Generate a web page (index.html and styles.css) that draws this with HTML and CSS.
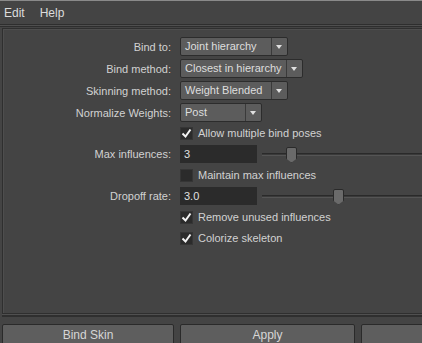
FILE: index.html
```html
<!DOCTYPE html>
<html lang="en">
<head>
    <meta charset="UTF-8">
    <title>Bind Skin Options</title>
    <link rel="stylesheet" href="styles.css">
</head>
<body>
    <div class="window">
        <div class="menubar">
            <span class="menu-item">Edit</span>
            <span class="menu-item">Help</span>
        </div>

        <div class="panel">
            <div class="options">
                <div class="row">
                    <span class="label">Bind to:</span>
                    <div class="dropdown w107"><span class="value">Joint hierarchy</span><span class="arrow"></span></div>
                </div>
                <div class="row">
                    <span class="label">Bind method:</span>
                    <div class="dropdown w122"><span class="value">Closest in hierarchy</span><span class="arrow"></span></div>
                </div>
                <div class="row">
                    <span class="label">Skinning method:</span>
                    <div class="dropdown w107"><span class="value">Weight Blended</span><span class="arrow"></span></div>
                </div>
                <div class="row">
                    <span class="label">Normalize Weights:</span>
                    <div class="dropdown w81"><span class="value">Post</span><span class="arrow"></span></div>
                </div>
                <div class="row check-row">
                    <span class="label"></span>
                    <label class="check"><span class="box"><svg viewBox="0 0 13 13"><polyline points="2.5,6.5 5.5,9.5 10.5,2.5"/></svg></span>Allow multiple bind poses</label>
                </div>
                <div class="row field-row">
                    <span class="label">Max influences:</span>
                    <div class="field">3</div>
                    <div class="slider"><span class="thumb" style="left: 24px"></span></div>
                </div>
                <div class="row check-row">
                    <span class="label"></span>
                    <label class="check"><span class="box"></span>Maintain max influences</label>
                </div>
                <div class="row field-row">
                    <span class="label">Dropoff rate:</span>
                    <div class="field">3.0</div>
                    <div class="slider"><span class="thumb" style="left: 71px"></span></div>
                </div>
                <div class="row check-row">
                    <span class="label"></span>
                    <label class="check"><span class="box"><svg viewBox="0 0 13 13"><polyline points="2.5,6.5 5.5,9.5 10.5,2.5"/></svg></span>Remove unused influences</label>
                </div>
                <div class="row check-row last">
                    <span class="label"></span>
                    <label class="check"><span class="box"><svg viewBox="0 0 13 13"><polyline points="2.5,6.5 5.5,9.5 10.5,2.5"/></svg></span>Colorize skeleton</label>
                </div>
            </div>
        </div>

        <div class="buttons">
            <button class="btn bind">Bind Skin</button>
            <button class="btn apply">Apply</button>
            <button class="btn close" title="Close"></button>
        </div>
    </div>
</body>
</html>
```

FILE: styles.css
```css
body {
    margin: 0;
    background-color: #444444;
    font-family: "Liberation Sans", Arial, sans-serif;
    font-size: 11px;
    color: #d2d2d2;
    overflow: hidden;
}

.window {
    width: 422px;
    height: 343px;
    overflow: hidden;
    border-top: 1px solid #8a8a8a;
    box-sizing: border-box;
}

.menubar {
    height: 23px;
    display: flex;
    align-items: center;
    gap: 15px;
    padding-left: 4px;
    border-bottom: 1px solid #2e2e2e;
    box-shadow: 0 1px 0 #4f4f4f, 0 2px 0 #2e2e2e;
    font-size: 12px;
    color: #dcdcdc;
}

.panel {
    margin: 3px 0 0 2px;
    height: 276px;
    border: 1px solid #2f2f2f;
    border-right: none;
    box-shadow: inset 1px 1px 0 #4e4e4e, 0 1px 0 #505050, 0 3px 0 #2f2f2f;
    padding-top: 8px;
}

.options {
    display: flex;
    flex-direction: column;
    gap: 3px;
}

.row {
    display: flex;
    align-items: center;
    height: 19px;
}

.check-row {
    height: 16px;
}

.check-row.last {
    margin-top: 2px;
}

.field-row {
    height: 20px;
}

.label {
    width: 168px;
    flex-shrink: 0;
    text-align: right;
    padding-right: 9px;
}

.dropdown {
    height: 19px;
    box-sizing: border-box;
    display: flex;
    background-color: #5c5c5c;
    border: 1px solid #2c2c2c;
    border-radius: 2px;
    color: #dedede;
}

.w107 { width: 108px; }
.w122 { width: 123px; }
.w81 { width: 82px; }

.dropdown .value {
    flex: 1;
    padding-left: 4px;
    line-height: 17px;
    white-space: nowrap;
}

.dropdown .arrow {
    width: 15px;
    border-left: 1px solid #3a3a3a;
    position: relative;
}

.dropdown .arrow::after {
    content: "";
    position: absolute;
    left: 4px;
    top: 7px;
    border-left: 3.5px solid transparent;
    border-right: 3.5px solid transparent;
    border-top: 4px solid #e0e0e0;
}

.check {
    display: flex;
    align-items: center;
    gap: 5px;
    white-space: nowrap;
}

.box {
    width: 13px;
    height: 13px;
    background-color: #2b2b2b;
    box-shadow: inset 0 0 0 1px #353535;
}

.box svg {
    display: block;
    width: 13px;
    height: 13px;
}

.box polyline {
    fill: none;
    stroke: #f2f2f2;
    stroke-width: 2;
}

.field {
    width: 77px;
    height: 18px;
    box-sizing: border-box;
    background-color: #2b2b2b;
    padding-left: 4px;
    line-height: 18px;
    color: #e0e0e0;
    flex-shrink: 0;
}

.slider {
    position: relative;
    flex: 1;
    margin-left: 5px;
    height: 3px;
    border-top: 1px solid #2a2a2a;
    border-bottom: 1px solid #555555;
    background-color: #3a3a3a;
    box-sizing: border-box;
}

.thumb {
    position: absolute;
    top: -7px;
    width: 9px;
    height: 14px;
    background-color: #6a6a6a;
    border: 1px solid #2a2a2a;
    border-radius: 2px 2px 0 0;
    clip-path: polygon(0 0, 100% 0, 100% 75%, 50% 100%, 0 75%);
}

.buttons {
    display: flex;
    gap: 6px;
    margin-top: 10px;
    padding-left: 2px;
}

.btn {
    height: 26px;
    background-color: #5e5e5e;
    border: 1px solid #2a2a2a;
    border-radius: 2px;
    color: #d6d6d6;
    font-family: "Liberation Sans", Arial, sans-serif;
    font-size: 12px;
    padding: 0 0 4px 0;
    flex-shrink: 0;
}

.bind { width: 172px; }
.apply { width: 175px; }
.close { width: 175px; }
```
